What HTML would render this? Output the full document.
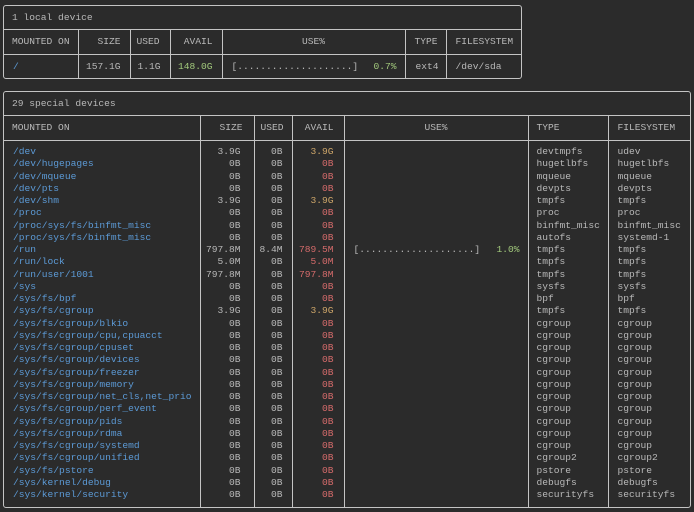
<!DOCTYPE html>
<html><head><meta charset="utf-8"><style>
html,body{margin:0;padding:0;background:#2b2b2b;width:694px;height:512px;overflow:hidden}
body{font-family:"Liberation Mono","DejaVu Sans Mono",monospace;font-size:9.6px;color:#b9b9b9}
.box{position:absolute;border:1px solid #c4c4c4;border-radius:3px;box-sizing:border-box}
table{border-collapse:collapse;table-layout:fixed;position:absolute;left:0;top:0}
td{padding:0;white-space:nowrap;overflow:hidden;border-left:1px solid #c4c4c4}
td:first-child{border-left:none}
tr.t td{border-left:none}
tr.h td{border-top:1px solid #c4c4c4;border-bottom:1px solid #c4c4c4}
.r{text-align:right}
.c{text-align:center}
.b{color:#5c9ad6}
.y{color:#cfa76a}
.rd{color:#d56b6b}
.g{color:#a2c97c}
.bar{display:flex;justify-content:space-between}
</style></head><body>

<div class="box" style="left:3px;top:5px;width:519px;height:74px">
<table style="width:517px">
<colgroup><col style="width:74px"><col style="width:52px"><col style="width:40px"><col style="width:52px"><col style="width:183px"><col style="width:41px"><col></colgroup>
<tr class="t" style="height:23px"><td colspan="7" style="padding-left:8px">1 local device</td></tr>
<tr class="h" style="height:25px"><td style="padding-left:8px">MOUNTED ON</td><td class="r" style="padding-right:9px">SIZE</td><td style="padding-left:6px">USED</td><td class="r" style="padding-right:9px">AVAIL</td><td class="c">USE%</td><td style="padding-left:9px">TYPE</td><td style="padding-left:9px">FILESYSTEM</td></tr>
<tr style="height:24px"><td class="b" style="padding-left:9px">/</td><td class="r" style="padding-right:9px">157.1G</td><td class="r" style="padding-right:9px">1.1G</td><td class="r g" style="padding-right:9px">148.0G</td><td style="padding:0 8px 0 9px"><div class="bar"><span>[....................]</span><span class="g">0.7%</span></div></td><td style="padding-left:10px">ext4</td><td style="padding-left:9px">/dev/sda</td></tr>
</table></div>

<div class="box" style="left:3px;top:91px;width:688px;height:417px">
<table style="width:686px">
<colgroup><col style="width:196px"><col style="width:54px"><col style="width:38px"><col style="width:52px"><col style="width:184px"><col style="width:80px"><col></colgroup>
<tr class="t" style="height:23px"><td colspan="7" style="padding-left:8px">29 special devices</td></tr>
<tr class="h" style="height:25px"><td style="padding-left:8px">MOUNTED ON</td><td class="r" style="padding-right:11px">SIZE</td><td class="r" style="padding-right:8px">USED</td><td class="r" style="padding-right:10px">AVAIL</td><td class="c">USE%</td><td style="padding-left:8px">TYPE</td><td style="padding-left:9px">FILESYSTEM</td></tr>
<tbody id="tb">
<tr style="height:6px"><td></td><td></td><td></td><td></td><td></td><td></td><td></td></tr>
</tbody>
</table></div>

<script>
var rows=[
["/dev","3.9G","0B","3.9G","y","devtmpfs","udev"],
["/dev/hugepages","0B","0B","0B","rd","hugetlbfs","hugetlbfs"],
["/dev/mqueue","0B","0B","0B","rd","mqueue","mqueue"],
["/dev/pts","0B","0B","0B","rd","devpts","devpts"],
["/dev/shm","3.9G","0B","3.9G","y","tmpfs","tmpfs"],
["/proc","0B","0B","0B","rd","proc","proc"],
["/proc/sys/fs/binfmt_misc","0B","0B","0B","rd","binfmt_misc","binfmt_misc"],
["/proc/sys/fs/binfmt_misc","0B","0B","0B","rd","autofs","systemd-1"],
["/run","797.8M","8.4M","789.5M","rd","tmpfs","tmpfs","1.0%"],
["/run/lock","5.0M","0B","5.0M","rd","tmpfs","tmpfs"],
["/run/user/1001","797.8M","0B","797.8M","rd","tmpfs","tmpfs"],
["/sys","0B","0B","0B","rd","sysfs","sysfs"],
["/sys/fs/bpf","0B","0B","0B","rd","bpf","bpf"],
["/sys/fs/cgroup","3.9G","0B","3.9G","y","tmpfs","tmpfs"],
["/sys/fs/cgroup/blkio","0B","0B","0B","rd","cgroup","cgroup"],
["/sys/fs/cgroup/cpu,cpuacct","0B","0B","0B","rd","cgroup","cgroup"],
["/sys/fs/cgroup/cpuset","0B","0B","0B","rd","cgroup","cgroup"],
["/sys/fs/cgroup/devices","0B","0B","0B","rd","cgroup","cgroup"],
["/sys/fs/cgroup/freezer","0B","0B","0B","rd","cgroup","cgroup"],
["/sys/fs/cgroup/memory","0B","0B","0B","rd","cgroup","cgroup"],
["/sys/fs/cgroup/net_cls,net_prio","0B","0B","0B","rd","cgroup","cgroup"],
["/sys/fs/cgroup/perf_event","0B","0B","0B","rd","cgroup","cgroup"],
["/sys/fs/cgroup/pids","0B","0B","0B","rd","cgroup","cgroup"],
["/sys/fs/cgroup/rdma","0B","0B","0B","rd","cgroup","cgroup"],
["/sys/fs/cgroup/systemd","0B","0B","0B","rd","cgroup","cgroup"],
["/sys/fs/cgroup/unified","0B","0B","0B","rd","cgroup2","cgroup2"],
["/sys/fs/pstore","0B","0B","0B","rd","pstore","pstore"],
["/sys/kernel/debug","0B","0B","0B","rd","debugfs","debugfs"],
["/sys/kernel/security","0B","0B","0B","rd","securityfs","securityfs"]];
var h="";
rows.forEach(function(r){
h+='<tr style="height:12.25px;line-height:12.25px"><td class="b" style="padding-left:9px">'+r[0]+'</td><td class="r" style="padding-right:13px">'+r[1]+'</td><td class="r" style="padding-right:9px">'+r[2]+'</td><td class="r '+r[4]+'" style="padding-right:10px">'+r[3]+'</td><td style="padding:0 8px 0 9px">'+(r[7]?'<div class="bar"><span>[....................]</span><span class="g">'+r[7]+'</span></div>':'')+'</td><td style="padding-left:8px">'+r[5]+'</td><td style="padding-left:9px">'+r[6]+'</td></tr>';
});
h+='<tr style="height:7px"><td></td><td></td><td></td><td></td><td></td><td></td><td></td></tr>';
document.getElementById("tb").insertAdjacentHTML("beforeend",h);
</script>
</body></html>
